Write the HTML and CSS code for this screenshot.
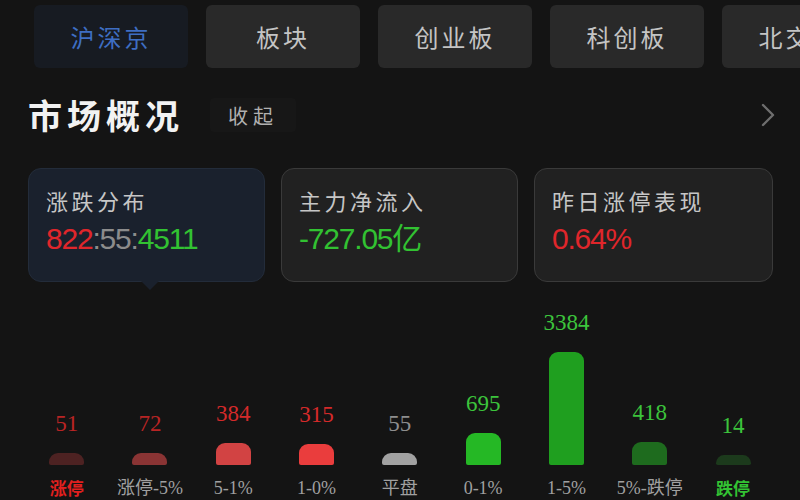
FILE: index.html
```html
<!DOCTYPE html>
<html lang="zh-CN">
<head>
<meta charset="utf-8">
<title>市场概况</title>
<link rel="stylesheet" href="styles.css">
</head>
<body>
<div class="page">
  <nav class="tabs">
    <div class="tab active">沪深京</div>
    <div class="tab">板块</div>
    <div class="tab">创业板</div>
    <div class="tab">科创板</div>
    <div class="tab">北交所</div>
  </nav>

  <div class="header">
    <h1 class="title">市场概况</h1>
    <span class="chip">收起</span>
    <span class="spacer"></span>
    <svg class="chevron" width="16" height="26" viewBox="0 0 16 26">
      <path d="M3 3 L13 13 L3 23" fill="none" stroke="#6e6e6e" stroke-width="2.4" stroke-linecap="round" stroke-linejoin="round"/>
    </svg>
  </div>

  <div class="cards">
    <div class="card selected">
      <div class="card-title">涨跌分布</div>
      <div class="card-value"><span class="up">822</span><span class="flat">:55:</span><span class="down">4511</span></div>
    </div>
    <div class="card">
      <div class="card-title">主力净流入</div>
      <div class="card-value down">-727.05亿</div>
    </div>
    <div class="card">
      <div class="card-title">昨日涨停表现</div>
      <div class="card-value up">0.64%</div>
    </div>
  </div>

  <div class="chart">
    <div class="col">
      <div class="num red-dark">51</div>
      <div class="bar" style="height:12px;background:#4d2222"></div>
      <div class="label up-strong">涨停</div>
    </div>
    <div class="col">
      <div class="num red-dark">72</div>
      <div class="bar" style="height:12px;background:#8a3434"></div>
      <div class="label">涨停-5%</div>
    </div>
    <div class="col">
      <div class="num red">384</div>
      <div class="bar" style="height:22px;background:#d24343"></div>
      <div class="label">5-1%</div>
    </div>
    <div class="col">
      <div class="num red">315</div>
      <div class="bar" style="height:21px;background:#ea3d3d"></div>
      <div class="label">1-0%</div>
    </div>
    <div class="col">
      <div class="num gray">55</div>
      <div class="bar" style="height:12px;background:#a2a2a2"></div>
      <div class="label">平盘</div>
    </div>
    <div class="col">
      <div class="num green">695</div>
      <div class="bar" style="height:32px;background:#25b825"></div>
      <div class="label">0-1%</div>
    </div>
    <div class="col">
      <div class="num green">3384</div>
      <div class="bar" style="height:113px;background:#1f9f1f"></div>
      <div class="label">1-5%</div>
    </div>
    <div class="col">
      <div class="num green">418</div>
      <div class="bar" style="height:23px;background:#1e6b1e"></div>
      <div class="label">5%-跌停</div>
    </div>
    <div class="col">
      <div class="num green">14</div>
      <div class="bar" style="height:10px;background:#1c3a1c"></div>
      <div class="label down-strong">跌停</div>
    </div>
  </div>
</div>
</body>
</html>
```

FILE: styles.css
```css
html, body {
  margin: 0;
  padding: 0;
  background: #141414;
}

.page {
  width: 800px;
  height: 500px;
  overflow: hidden;
  background: #141414;
  font-family: "Noto Sans CJK SC", "Noto Sans", sans-serif;
  color: #c8c8c8;
}

/* Tabs */
.tabs {
  display: flex;
  gap: 18px;
  padding-left: 34px;
  margin-top: 5px;
  height: 63px;
}

.tab {
  flex: 0 0 154px;
  height: 63px;
  border-radius: 6px;
  background: #292929;
  color: #c4c4c4;
  font-size: 24px;
  letter-spacing: 3px;
  display: flex;
  align-items: center;
  justify-content: center;
}

.tab.active {
  background: #171b22;
  color: #3e6ec2;
}

/* Header */
.header {
  display: flex;
  align-items: center;
  height: 46px;
  margin-top: 24px;
  padding-left: 28px;
  padding-right: 24px;
}

.title {
  margin: 0;
  font-size: 34px;
  font-weight: 700;
  letter-spacing: 5px;
  color: #f2f2f2;
  line-height: 46px;
}

.chip {
  margin-left: 26px;
  height: 34px;
  padding: 0 18px;
  background: #171717;
  border-radius: 4px;
  font-size: 20px;
  letter-spacing: 5px;
  color: #b0b0b0;
  display: flex;
  align-items: center;
}

.spacer {
  flex: 1;
}

.chevron {
  display: block;
}

/* Cards */
.cards {
  display: flex;
  gap: 16px;
  margin-top: 30px;
  padding-left: 28px;
}

.card {
  position: relative;
  flex: 0 0 237px;
  height: 114px;
  box-sizing: border-box;
  padding: 16px 17px 0;
  background: #212121;
  border: 1px solid #3a3a3a;
  border-radius: 13px;
}

.card:last-child {
  flex-basis: 239px;
}

.card.selected {
  background: #1a212d;
  border-color: #232c3a;
}

.card.selected::after {
  content: "";
  position: absolute;
  left: 112px;
  bottom: -9px;
  width: 0;
  height: 0;
  border-left: 9px solid transparent;
  border-right: 9px solid transparent;
  border-top: 9px solid #1a212d;
}

.card-title {
  font-size: 22px;
  letter-spacing: 3.5px;
  line-height: 30px;
  color: #c6c6c6;
}

.card-value {
  margin-top: 4px;
  font-family: "Liberation Sans", "Noto Sans CJK SC", sans-serif;
  font-size: 30px;
  letter-spacing: -1.2px;
  line-height: 40px;
}

.card-value .flat {
  color: #8c8c8c;
}

.up {
  color: #e0262b;
}

.down {
  color: #32c232;
}

/* Chart */
.chart {
  display: flex;
  align-items: flex-end;
  height: 218px;
  padding-left: 25px;
}

.col {
  flex: 0 0 83.3px;
  display: flex;
  flex-direction: column;
  align-items: center;
}

.num {
  font-family: "Liberation Serif", serif;
  font-size: 23px;
  line-height: 24px;
  margin-bottom: 17px;
}

.red-dark { color: #b82424; }
.red { color: #d42a2a; }
.gray { color: #8e8e8e; }
.green { color: #3cc43c; }

.bar {
  width: 35px;
  border-radius: 9px 9px 2px 2px;
}

.label {
  height: 35px;
  box-sizing: border-box;
  padding-top: 12px;
  font-family: "Liberation Serif", "Noto Sans CJK SC", serif;
  font-size: 18px;
  line-height: 22px;
  color: #a0a0a0;
  white-space: nowrap;
}

.label.up-strong {
  color: #e2201f;
  font-weight: 700;
  font-family: "Noto Sans CJK SC", sans-serif;
  font-size: 17px;
}

.label.down-strong {
  color: #33c233;
  font-weight: 700;
  font-family: "Noto Sans CJK SC", sans-serif;
  font-size: 17px;
}
```
